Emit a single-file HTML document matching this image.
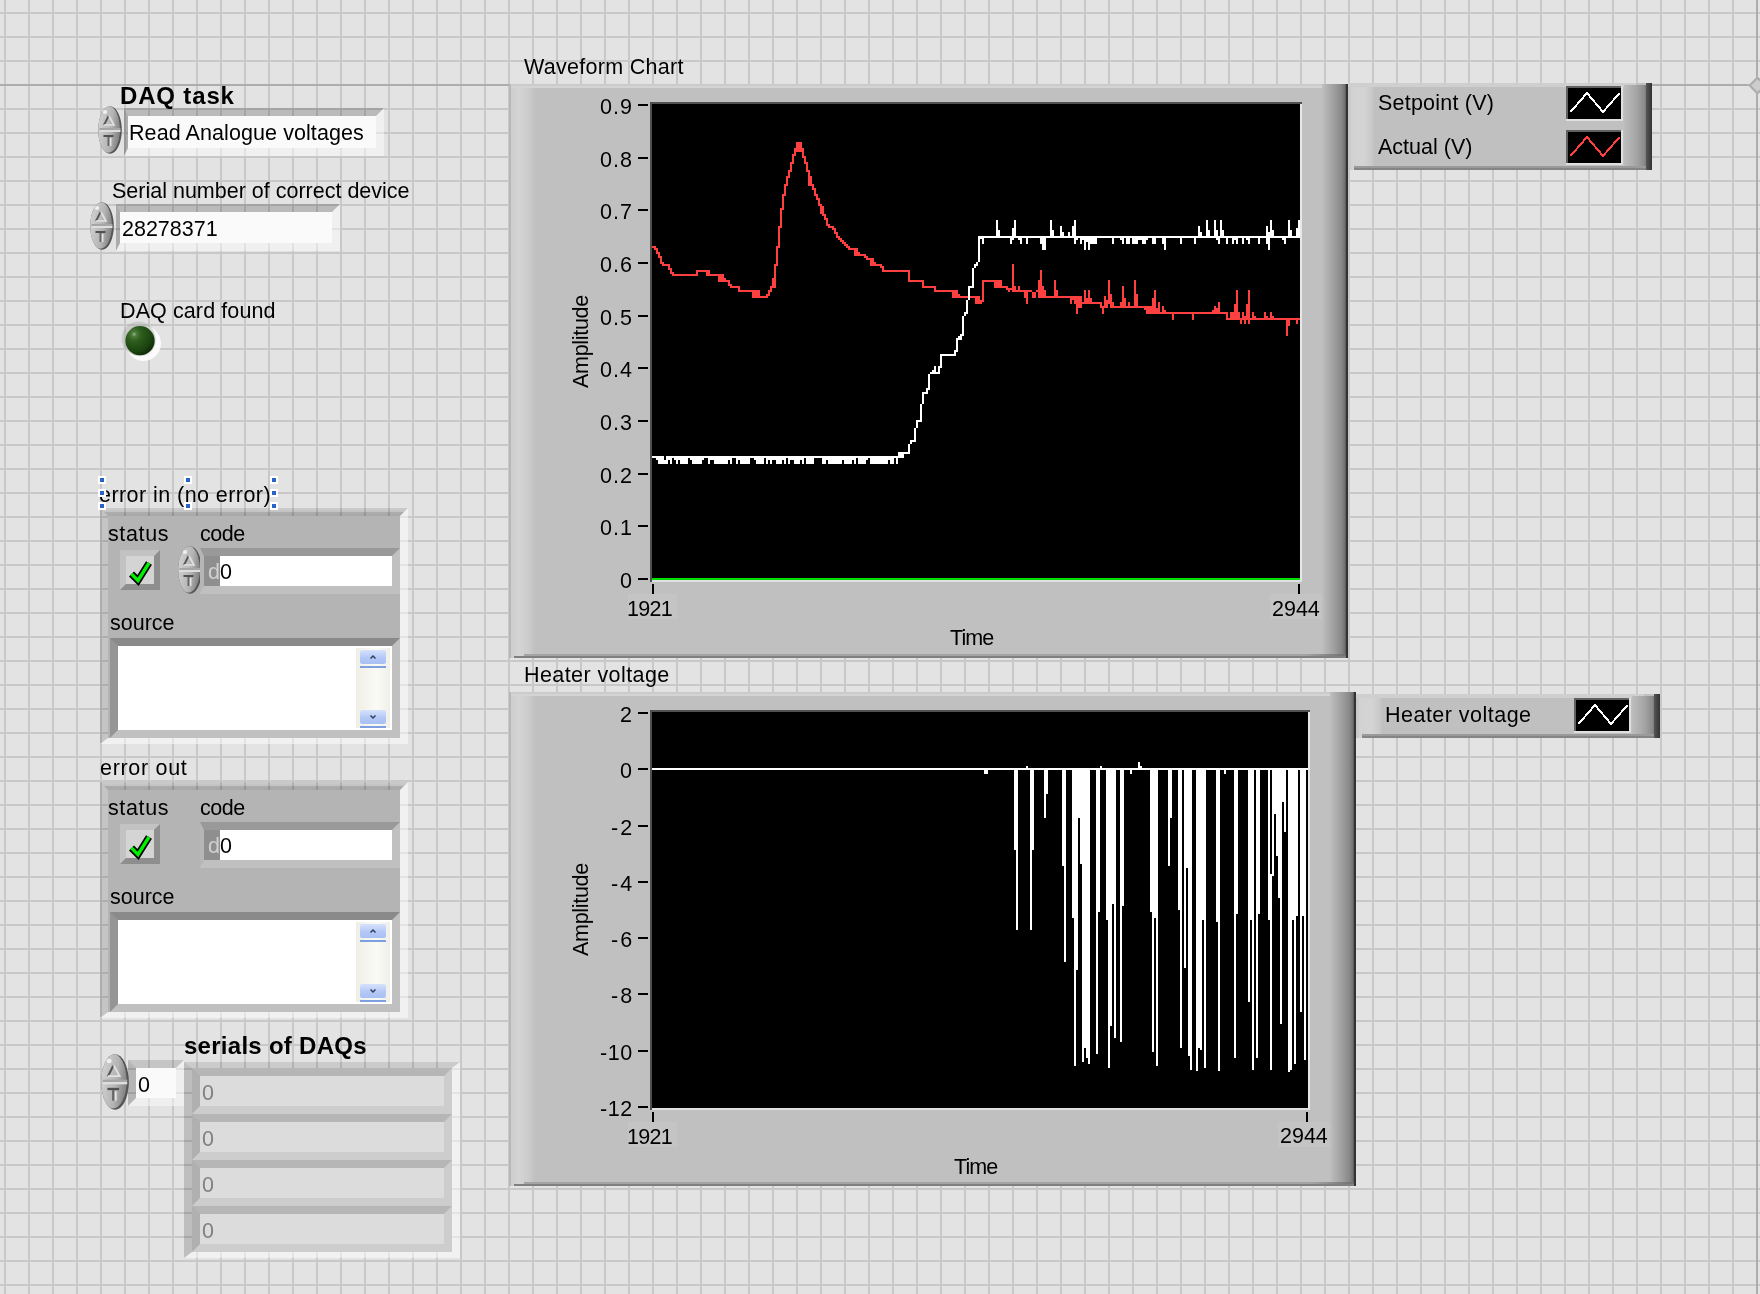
<!DOCTYPE html>
<html><head><meta charset="utf-8"><title>LabVIEW front panel</title>
<style>
html,body{margin:0;padding:0}
body{width:1760px;height:1294px;overflow:hidden;position:relative;background-color:#e3e3e3;
background-image:linear-gradient(90deg,#c8c8c8 2px,transparent 2px),linear-gradient(#c8c8c8 2px,transparent 2px);
background-size:24px 24px,24px 24px;background-position:4px 0,0 12px}
div{position:absolute;box-sizing:border-box}
.t{font-family:"Liberation Sans",sans-serif;line-height:1;white-space:pre;color:#000;will-change:transform}
</style></head><body>
<div style="left:0px;top:84px;width:1750px;height:2px;background:#adadad"></div>
<div style="left:1756px;top:0px;width:2px;height:1294px;background:#adadad"></div>
<div style="left:1750.5px;top:78.5px;width:13px;height:13px;transform:rotate(45deg);background:#cdcdcd;border:2px solid #adadad"></div>
<div class="t" style="left:120.2px;top:83.5px;font-size:24px;font-weight:bold;letter-spacing:0.84px;color:#000;">DAQ task</div>
<svg style="position:absolute;left:98px;top:106px" width="24" height="48" viewBox="0 0 24 48" preserveAspectRatio="none">
<defs><linearGradient id="sp98_106" x1="0" y1="0" x2="1" y2="0.25">
<stop offset="0" stop-color="#dadada"/><stop offset="0.35" stop-color="#c6c6c6"/><stop offset="0.7" stop-color="#b4b4b4"/><stop offset="1" stop-color="#8a8a8a"/></linearGradient></defs>
<clipPath id="csp98_106"><ellipse cx="12" cy="24" rx="11.8" ry="23.8"/></clipPath>
<g clip-path="url(#csp98_106)"><rect x="0" y="0" width="24" height="48" fill="#555"/>
<ellipse cx="10.3" cy="23.2" rx="11.6" ry="23.6" fill="url(#sp98_106)"/></g>
<ellipse cx="7" cy="6" rx="2.2" ry="2" fill="#f4f4f4" opacity="0.9"/>
<rect x="1.5" y="22" width="21" height="2" fill="#a6a6a6"/><rect x="1.5" y="24" width="21" height="2" fill="#dedede"/>
<path d="M6 19 L10.5 10" stroke="#555" stroke-width="1.8" fill="none"/>
<path d="M11 10 L16 19 L6 19" stroke="#e2e2e2" stroke-width="1.6" fill="none"/>
<path d="M5.5 30 L15.5 30" stroke="#505050" stroke-width="2" fill="none"/>
<path d="M10.5 31 L10.5 40" stroke="#666" stroke-width="2" fill="none"/>
<path d="M12.6 32 L12.6 40" stroke="#e6e6e6" stroke-width="1.6" fill="none"/>
</svg>
<div style="left:124px;top:108px;width:260px;height:48px;box-sizing:border-box;border-style:solid;border-width:8px 8px 8px 4px;border-color:rgba(0,0,0,.18) rgba(255,255,255,.45) rgba(255,255,255,.45) rgba(0,0,0,.24);background:#fafafa;background-clip:padding-box"></div>
<div class="t" style="left:129.4px;top:122.6px;font-size:21.5px;letter-spacing:0.08px;color:#000;">Read Analogue voltages</div>
<div class="t" style="left:111.8px;top:180.6px;font-size:21.5px;color:#000;">Serial number of correct device</div>
<svg style="position:absolute;left:90px;top:202px" width="24" height="48" viewBox="0 0 24 48" preserveAspectRatio="none">
<defs><linearGradient id="sp90_202" x1="0" y1="0" x2="1" y2="0.25">
<stop offset="0" stop-color="#dadada"/><stop offset="0.35" stop-color="#c6c6c6"/><stop offset="0.7" stop-color="#b4b4b4"/><stop offset="1" stop-color="#8a8a8a"/></linearGradient></defs>
<clipPath id="csp90_202"><ellipse cx="12" cy="24" rx="11.8" ry="23.8"/></clipPath>
<g clip-path="url(#csp90_202)"><rect x="0" y="0" width="24" height="48" fill="#555"/>
<ellipse cx="10.3" cy="23.2" rx="11.6" ry="23.6" fill="url(#sp90_202)"/></g>
<ellipse cx="7" cy="6" rx="2.2" ry="2" fill="#f4f4f4" opacity="0.9"/>
<rect x="1.5" y="22" width="21" height="2" fill="#a6a6a6"/><rect x="1.5" y="24" width="21" height="2" fill="#dedede"/>
<path d="M6 19 L10.5 10" stroke="#555" stroke-width="1.8" fill="none"/>
<path d="M11 10 L16 19 L6 19" stroke="#e2e2e2" stroke-width="1.6" fill="none"/>
<path d="M5.5 30 L15.5 30" stroke="#505050" stroke-width="2" fill="none"/>
<path d="M10.5 31 L10.5 40" stroke="#666" stroke-width="2" fill="none"/>
<path d="M12.6 32 L12.6 40" stroke="#e6e6e6" stroke-width="1.6" fill="none"/>
</svg>
<div style="left:116px;top:204px;width:224px;height:47px;box-sizing:border-box;border-style:solid;border-width:8px 8px 8px 4px;border-color:rgba(0,0,0,.18) rgba(255,255,255,.45) rgba(255,255,255,.45) rgba(0,0,0,.24);background:#fafafa;background-clip:padding-box"></div>
<div class="t" style="left:121.5px;top:218.7px;font-size:21.5px;color:#000;">28278371</div>
<div class="t" style="left:119.6px;top:301.0px;font-size:21.5px;letter-spacing:0.1px;color:#000;">DAQ card found</div>
<svg style="position:absolute;left:118px;top:318px" width="48" height="48" viewBox="0 0 48 48">
<defs><radialGradient id="led" cx="0.3" cy="0.28" r="0.85">
<stop offset="0" stop-color="#9ab48c"/><stop offset="0.1" stop-color="#4a7a38"/><stop offset="0.3" stop-color="#2c5c1c"/><stop offset="0.7" stop-color="#1b4410"/><stop offset="1" stop-color="#082004"/></radialGradient></defs>
<circle cx="25.5" cy="25.5" r="17.5" fill="#ffffff" opacity="0.85"/>
<circle cx="20.5" cy="20.5" r="17" fill="#9a9a9a" opacity="0.3"/>
<circle cx="22" cy="22.7" r="15.6" fill="#b8b8b8" opacity="0.5"/>
<circle cx="22" cy="22.7" r="14.6" fill="url(#led)"/>
</svg>
<div class="t" style="left:99.0px;top:485.0px;font-size:21.5px;letter-spacing:0.44px;color:#000;">error in (no error)</div>
<div style="left:100px;top:508px;width:308px;height:236px;box-sizing:border-box;border-style:solid;border-width:8px 8px 6px 8px;border-color:rgba(0,0,0,0) rgba(255,255,255,.5) rgba(255,255,255,.5) rgba(0,0,0,.13);background:#b4b4b4;background-clip:padding-box"></div>
<div style="left:100px;top:508px;width:308px;height:8px;background:linear-gradient(rgba(0,0,0,.1),rgba(0,0,0,.14) 50%,rgba(0,0,0,.24) 50%,rgba(0,0,0,.26));clip-path:polygon(0 0,100% 0,300px 100%,8px 100%)"></div>
<div class="t" style="left:107.7px;top:524.0px;font-size:21.5px;letter-spacing:0.62px;color:#000;">status</div>
<div class="t" style="left:200.0px;top:524.0px;font-size:21.5px;letter-spacing:-0.45px;color:#000;">code</div>
<svg style="position:absolute;left:120px;top:550px" width="40" height="40" viewBox="0 0 40 40">
<polygon points="0,0 40,0 34,6 6,6 6,34 0,40" fill="#c2c2c2"/>
<polygon points="40,0 40,40 0,40 6,34 34,34 34,6" fill="#8e8e8e"/>
<rect x="6" y="6" width="28" height="28" fill="#d4d4d4"/>
<path d="M11.5 24 L18 30.5 L29 13" fill="none" stroke="#000" stroke-width="7" stroke-linejoin="miter" stroke-linecap="butt"/>
<path d="M11.5 24 L18 30.5 L29 13" fill="none" stroke="#00f000" stroke-width="3.4" stroke-linejoin="miter" stroke-linecap="butt"/>
</svg>
<svg style="position:absolute;left:178px;top:546px" width="24" height="48" viewBox="0 0 24 48" preserveAspectRatio="none">
<defs><linearGradient id="sp178_546" x1="0" y1="0" x2="1" y2="0.25">
<stop offset="0" stop-color="#dadada"/><stop offset="0.35" stop-color="#c6c6c6"/><stop offset="0.7" stop-color="#b4b4b4"/><stop offset="1" stop-color="#8a8a8a"/></linearGradient></defs>
<clipPath id="csp178_546"><ellipse cx="12" cy="24" rx="11.8" ry="23.8"/></clipPath>
<g clip-path="url(#csp178_546)"><rect x="0" y="0" width="24" height="48" fill="#555"/>
<ellipse cx="10.3" cy="23.2" rx="11.6" ry="23.6" fill="url(#sp178_546)"/></g>
<ellipse cx="7" cy="6" rx="2.2" ry="2" fill="#f4f4f4" opacity="0.9"/>
<rect x="1.5" y="22" width="21" height="2" fill="#a6a6a6"/><rect x="1.5" y="24" width="21" height="2" fill="#dedede"/>
<path d="M6 19 L10.5 10" stroke="#555" stroke-width="1.8" fill="none"/>
<path d="M11 10 L16 19 L6 19" stroke="#e2e2e2" stroke-width="1.6" fill="none"/>
<path d="M5.5 30 L15.5 30" stroke="#505050" stroke-width="2" fill="none"/>
<path d="M10.5 31 L10.5 40" stroke="#666" stroke-width="2" fill="none"/>
<path d="M12.6 32 L12.6 40" stroke="#e6e6e6" stroke-width="1.6" fill="none"/>
</svg>
<div style="left:200px;top:548px;width:200px;height:46px;box-sizing:border-box;border-style:solid;border-width:8px 8px 8px 4px;border-color:#999999 #c0c0c0 #c0c0c0 #b6b6b6;background:#fff;background-clip:padding-box"></div>
<div style="left:204px;top:556px;width:16px;height:30px;background:#8f8f8f"></div>
<div class="t" style="left:207.7px;top:562.0px;font-size:21.5px;letter-spacing:-0.5px;color:#d0d0d0;">d</div>
<div class="t" style="left:219.5px;top:562.0px;font-size:21.5px;color:#000;">0</div>
<div class="t" style="left:109.6px;top:612.6px;font-size:21.5px;color:#000;">source</div>
<div style="left:110px;top:638px;width:290px;height:100px;box-sizing:border-box;border-style:solid;border-width:8px 8px 8px 8px;border-color:#8a8a8a #c0c0c0 #c0c0c0 #959595;background:#fff;background-clip:padding-box"></div>
<div style="left:356px;top:648px;width:34px;height:80px;background:linear-gradient(90deg,#efeee6,#fbfbf6 60%,#efeee8)"></div>
<div style="left:360px;top:650px;width:26px;height:14px;border-radius:2px;background:linear-gradient(#d6e2fc,#b4c8f6 55%,#a9c0f4)"></div>
<div style="left:360px;top:666px;width:26px;height:2px;background:#7d9fe0"></div>
<svg style="position:absolute;left:369px;top:654px" width="8" height="6"><path d="M1.5 4.5 L4 2 L6.5 4.5" fill="none" stroke="#33405a" stroke-width="1.5"/></svg>
<div style="left:360px;top:710px;width:26px;height:14px;border-radius:2px;background:linear-gradient(#d6e2fc,#b4c8f6 55%,#a9c0f4)"></div>
<div style="left:360px;top:726px;width:26px;height:2px;background:#7d9fe0"></div>
<svg style="position:absolute;left:369px;top:714px" width="8" height="6"><path d="M1.5 1.5 L4 4 L6.5 1.5" fill="none" stroke="#33405a" stroke-width="1.5"/></svg>
<div style="left:98px;top:476px;width:8px;height:8px;background:#fff"></div>
<div style="left:100px;top:478px;width:4px;height:4px;background:#2a62c8"></div>
<div style="left:98px;top:502px;width:8px;height:8px;background:#fff"></div>
<div style="left:100px;top:504px;width:4px;height:4px;background:#2a62c8"></div>
<div style="left:184px;top:476px;width:8px;height:8px;background:#fff"></div>
<div style="left:186px;top:478px;width:4px;height:4px;background:#2a62c8"></div>
<div style="left:184px;top:502px;width:8px;height:8px;background:#fff"></div>
<div style="left:186px;top:504px;width:4px;height:4px;background:#2a62c8"></div>
<div style="left:270px;top:476px;width:8px;height:8px;background:#fff"></div>
<div style="left:272px;top:478px;width:4px;height:4px;background:#2a62c8"></div>
<div style="left:270px;top:502px;width:8px;height:8px;background:#fff"></div>
<div style="left:272px;top:504px;width:4px;height:4px;background:#2a62c8"></div>
<div style="left:98px;top:489px;width:8px;height:8px;background:#fff"></div>
<div style="left:100px;top:491px;width:4px;height:4px;background:#2a62c8"></div>
<div style="left:270px;top:489px;width:8px;height:8px;background:#fff"></div>
<div style="left:272px;top:491px;width:4px;height:4px;background:#2a62c8"></div>
<div class="t" style="left:99.5px;top:758.4px;font-size:21.5px;letter-spacing:0.69px;color:#000;">error out</div>
<div style="left:100px;top:782px;width:308px;height:236px;box-sizing:border-box;border-style:solid;border-width:8px 8px 6px 8px;border-color:rgba(0,0,0,0) rgba(255,255,255,.5) rgba(255,255,255,.5) rgba(0,0,0,.13);background:#b4b4b4;background-clip:padding-box"></div>
<div style="left:100px;top:782px;width:308px;height:8px;background:linear-gradient(rgba(0,0,0,.1),rgba(0,0,0,.14) 50%,rgba(0,0,0,.24) 50%,rgba(0,0,0,.26));clip-path:polygon(0 0,100% 0,300px 100%,8px 100%)"></div>
<div class="t" style="left:107.7px;top:798.0px;font-size:21.5px;letter-spacing:0.62px;color:#000;">status</div>
<div class="t" style="left:200.0px;top:798.0px;font-size:21.5px;letter-spacing:-0.45px;color:#000;">code</div>
<svg style="position:absolute;left:120px;top:824px" width="40" height="40" viewBox="0 0 40 40">
<polygon points="0,0 40,0 34,6 6,6 6,34 0,40" fill="#c2c2c2"/>
<polygon points="40,0 40,40 0,40 6,34 34,34 34,6" fill="#8e8e8e"/>
<rect x="6" y="6" width="28" height="28" fill="#d4d4d4"/>
<path d="M11.5 24 L18 30.5 L29 13" fill="none" stroke="#000" stroke-width="7" stroke-linejoin="miter" stroke-linecap="butt"/>
<path d="M11.5 24 L18 30.5 L29 13" fill="none" stroke="#00f000" stroke-width="3.4" stroke-linejoin="miter" stroke-linecap="butt"/>
</svg>
<div style="left:200px;top:822px;width:200px;height:46px;box-sizing:border-box;border-style:solid;border-width:8px 8px 8px 4px;border-color:#999999 #c0c0c0 #c0c0c0 #b6b6b6;background:#fff;background-clip:padding-box"></div>
<div style="left:204px;top:830px;width:16px;height:30px;background:#8f8f8f"></div>
<div class="t" style="left:207.7px;top:836.0px;font-size:21.5px;letter-spacing:-0.5px;color:#d0d0d0;">d</div>
<div class="t" style="left:219.5px;top:836.0px;font-size:21.5px;color:#000;">0</div>
<div class="t" style="left:109.6px;top:886.6px;font-size:21.5px;color:#000;">source</div>
<div style="left:110px;top:912px;width:290px;height:100px;box-sizing:border-box;border-style:solid;border-width:8px 8px 8px 8px;border-color:#8a8a8a #c0c0c0 #c0c0c0 #959595;background:#fff;background-clip:padding-box"></div>
<div style="left:356px;top:922px;width:34px;height:80px;background:linear-gradient(90deg,#efeee6,#fbfbf6 60%,#efeee8)"></div>
<div style="left:360px;top:924px;width:26px;height:14px;border-radius:2px;background:linear-gradient(#d6e2fc,#b4c8f6 55%,#a9c0f4)"></div>
<div style="left:360px;top:940px;width:26px;height:2px;background:#7d9fe0"></div>
<svg style="position:absolute;left:369px;top:928px" width="8" height="6"><path d="M1.5 4.5 L4 2 L6.5 4.5" fill="none" stroke="#33405a" stroke-width="1.5"/></svg>
<div style="left:360px;top:984px;width:26px;height:14px;border-radius:2px;background:linear-gradient(#d6e2fc,#b4c8f6 55%,#a9c0f4)"></div>
<div style="left:360px;top:1000px;width:26px;height:2px;background:#7d9fe0"></div>
<svg style="position:absolute;left:369px;top:988px" width="8" height="6"><path d="M1.5 1.5 L4 4 L6.5 1.5" fill="none" stroke="#33405a" stroke-width="1.5"/></svg>
<div class="t" style="left:183.9px;top:1033.6px;font-size:24px;font-weight:bold;letter-spacing:0.27px;color:#000;">serials of DAQs</div>
<svg style="position:absolute;left:101px;top:1054px" width="28" height="56" viewBox="0 0 24 48" preserveAspectRatio="none">
<defs><linearGradient id="sp101_1054" x1="0" y1="0" x2="1" y2="0.25">
<stop offset="0" stop-color="#dadada"/><stop offset="0.35" stop-color="#c6c6c6"/><stop offset="0.7" stop-color="#b4b4b4"/><stop offset="1" stop-color="#8a8a8a"/></linearGradient></defs>
<clipPath id="csp101_1054"><ellipse cx="12" cy="24" rx="11.8" ry="23.8"/></clipPath>
<g clip-path="url(#csp101_1054)"><rect x="0" y="0" width="24" height="48" fill="#555"/>
<ellipse cx="10.3" cy="23.2" rx="11.6" ry="23.6" fill="url(#sp101_1054)"/></g>
<ellipse cx="7" cy="6" rx="2.2" ry="2" fill="#f4f4f4" opacity="0.9"/>
<rect x="1.5" y="22" width="21" height="2" fill="#a6a6a6"/><rect x="1.5" y="24" width="21" height="2" fill="#dedede"/>
<path d="M6 19 L10.5 10" stroke="#555" stroke-width="1.8" fill="none"/>
<path d="M11 10 L16 19 L6 19" stroke="#e2e2e2" stroke-width="1.6" fill="none"/>
<path d="M5.5 30 L15.5 30" stroke="#505050" stroke-width="2" fill="none"/>
<path d="M10.5 31 L10.5 40" stroke="#666" stroke-width="2" fill="none"/>
<path d="M12.6 32 L12.6 40" stroke="#e6e6e6" stroke-width="1.6" fill="none"/>
</svg>
<div style="left:128px;top:1060px;width:56px;height:46px;box-sizing:border-box;border-style:solid;border-width:8px 8px 8px 8px;border-color:rgba(0,0,0,.13) rgba(255,255,255,.45) rgba(255,255,255,.45) rgba(0,0,0,.2);background:#fafafa;background-clip:padding-box"></div>
<div class="t" style="left:138.0px;top:1074.6px;font-size:21.5px;color:#000;">0</div>
<div style="left:184px;top:1062px;width:276px;height:196px;box-sizing:border-box;border-style:solid;border-width:6px 8px 6px 8px;border-color:rgba(0,0,0,.10) rgba(255,255,255,.5) rgba(255,255,255,.5) rgba(0,0,0,.16);background:transparent;background-clip:padding-box"></div>
<div style="left:192px;top:1068px;width:260px;height:184px;background:#cdcdcd"></div>
<div style="left:192px;top:1068px;width:260px;height:46px;box-sizing:border-box;border-style:solid;border-width:8px 8px 8px 8px;border-color:#b6b6b6 #cdcdcd #cdcdcd #b0b0b0;background:#dcdcdc;background-clip:padding-box"></div>
<div class="t" style="left:202.0px;top:1082.8px;font-size:21.5px;color:#808080;">0</div>
<div style="left:192px;top:1114px;width:260px;height:46px;box-sizing:border-box;border-style:solid;border-width:8px 8px 8px 8px;border-color:#b6b6b6 #cdcdcd #cdcdcd #b0b0b0;background:#dcdcdc;background-clip:padding-box"></div>
<div class="t" style="left:202.0px;top:1128.8px;font-size:21.5px;color:#808080;">0</div>
<div style="left:192px;top:1160px;width:260px;height:46px;box-sizing:border-box;border-style:solid;border-width:8px 8px 8px 8px;border-color:#b6b6b6 #cdcdcd #cdcdcd #b0b0b0;background:#dcdcdc;background-clip:padding-box"></div>
<div class="t" style="left:202.0px;top:1174.8px;font-size:21.5px;color:#808080;">0</div>
<div style="left:192px;top:1206px;width:260px;height:46px;box-sizing:border-box;border-style:solid;border-width:8px 8px 8px 8px;border-color:#b6b6b6 #cdcdcd #cdcdcd #b0b0b0;background:#dcdcdc;background-clip:padding-box"></div>
<div class="t" style="left:202.0px;top:1220.8px;font-size:21.5px;color:#808080;">0</div>
<div style="left:509px;top:84px;width:839px;height:574px;background:#c0c0c0"></div>
<div style="left:509px;top:84px;width:26px;height:574px;background:linear-gradient(90deg,#b8b8b8 0,#b8b8b8 2px,#cecece 2px,#d4d4d4 40%,#cacaca 80%,#c0c0c0)"></div>
<div style="left:511px;top:84px;width:813px;height:4px;background:linear-gradient(#cbcbcb 50%,#d4d4d4 50%)"></div>
<div style="left:1322px;top:84px;width:26px;height:574px;background:linear-gradient(90deg,#c0c0c0,#b4b4b4 15%,#a0a0a0 45%,#888 75%,#6c6c6c 90%,#333 92%,#333)"></div>
<div style="left:524px;top:654px;width:822px;height:2px;background:linear-gradient(90deg,#a4a4a4 95%,#707070)"></div>
<div style="left:514px;top:656px;width:832px;height:2px;background:#808080"></div>
<div class="t" style="left:523.6px;top:56.8px;font-size:21.5px;letter-spacing:0.29px;color:#000;">Waveform Chart</div>
<div style="left:509px;top:692px;width:847px;height:494px;background:#c0c0c0"></div>
<div style="left:509px;top:692px;width:26px;height:494px;background:linear-gradient(90deg,#b8b8b8 0,#b8b8b8 2px,#cecece 2px,#d4d4d4 40%,#cacaca 80%,#c0c0c0)"></div>
<div style="left:511px;top:692px;width:821px;height:4px;background:linear-gradient(#cbcbcb 50%,#d4d4d4 50%)"></div>
<div style="left:1330px;top:692px;width:26px;height:494px;background:linear-gradient(90deg,#c0c0c0,#b4b4b4 15%,#a0a0a0 45%,#888 75%,#6c6c6c 90%,#333 92%,#333)"></div>
<div style="left:524px;top:1182px;width:830px;height:2px;background:linear-gradient(90deg,#a4a4a4 95%,#707070)"></div>
<div style="left:514px;top:1184px;width:840px;height:2px;background:#808080"></div>
<div class="t" style="left:523.6px;top:664.9px;font-size:21.5px;letter-spacing:0.42px;color:#000;">Heater voltage</div>
<div style="left:650px;top:102px;width:652px;height:480px;background:#505050"></div>
<div style="left:1300px;top:104px;width:2px;height:478px;background:#e8e8e8"></div>
<div style="left:652px;top:580px;width:650px;height:2px;background:#e0e0e0"></div>
<div style="left:652px;top:104px;width:648px;height:476px;background:#000"></div>
<div style="left:638px;top:578px;width:10px;height:2px;background:#000"></div>
<div class="t" style="left:620.0px;top:570.8px;font-size:21.5px;color:#000;">0</div>
<div style="left:638px;top:525px;width:10px;height:2px;background:#000"></div>
<div class="t" style="left:600.0px;top:518.2px;font-size:21.5px;letter-spacing:1.0px;color:#000;">0.1</div>
<div style="left:638px;top:473px;width:10px;height:2px;background:#000"></div>
<div class="t" style="left:600.0px;top:465.5px;font-size:21.5px;letter-spacing:1.0px;color:#000;">0.2</div>
<div style="left:638px;top:420px;width:10px;height:2px;background:#000"></div>
<div class="t" style="left:600.0px;top:412.9px;font-size:21.5px;letter-spacing:1.0px;color:#000;">0.3</div>
<div style="left:638px;top:367px;width:10px;height:2px;background:#000"></div>
<div class="t" style="left:600.0px;top:360.2px;font-size:21.5px;letter-spacing:1.0px;color:#000;">0.4</div>
<div style="left:638px;top:315px;width:10px;height:2px;background:#000"></div>
<div class="t" style="left:600.0px;top:307.6px;font-size:21.5px;letter-spacing:1.0px;color:#000;">0.5</div>
<div style="left:638px;top:262px;width:10px;height:2px;background:#000"></div>
<div class="t" style="left:600.0px;top:255.0px;font-size:21.5px;letter-spacing:1.0px;color:#000;">0.6</div>
<div style="left:638px;top:209px;width:10px;height:2px;background:#000"></div>
<div class="t" style="left:600.0px;top:202.3px;font-size:21.5px;letter-spacing:1.0px;color:#000;">0.7</div>
<div style="left:638px;top:157px;width:10px;height:2px;background:#000"></div>
<div class="t" style="left:600.0px;top:149.7px;font-size:21.5px;letter-spacing:1.0px;color:#000;">0.8</div>
<div style="left:638px;top:104px;width:10px;height:2px;background:#000"></div>
<div class="t" style="left:600.0px;top:97.0px;font-size:21.5px;letter-spacing:1.0px;color:#000;">0.9</div>
<div style="left:652px;top:584px;width:2px;height:10px;background:#000"></div>
<div style="left:1298px;top:584px;width:2px;height:10px;background:#000"></div>
<div style="left:628px;top:594px;width:49px;height:25px;background:rgba(255,255,255,.07)"></div>
<div style="left:1270px;top:594px;width:52px;height:25px;background:rgba(255,255,255,.07)"></div>
<div class="t" style="left:627.4px;top:598.8px;font-size:21.5px;letter-spacing:-0.7px;color:#000;">1921</div>
<div class="t" style="left:1271.8px;top:598.8px;font-size:21.5px;color:#000;">2944</div>
<div class="t" style="left:950.3px;top:628.3px;font-size:21.5px;letter-spacing:-0.9px;color:#000;">Time</div>
<div class="t" style="left:571px;top:388px;font-size:21.5px;letter-spacing:-0.3px;transform-origin:0 0;transform:rotate(-90deg)">Amplitude</div>
<div style="left:650px;top:710px;width:660px;height:400px;background:#505050"></div>
<div style="left:1308px;top:712px;width:2px;height:398px;background:#e8e8e8"></div>
<div style="left:652px;top:1108px;width:658px;height:2px;background:#e0e0e0"></div>
<div style="left:652px;top:712px;width:656px;height:396px;background:#000"></div>
<div style="left:638px;top:712px;width:10px;height:2px;background:#000"></div>
<div class="t" style="left:620.0px;top:705.1px;font-size:21.5px;color:#000;">2</div>
<div style="left:638px;top:768px;width:10px;height:2px;background:#000"></div>
<div class="t" style="left:620.0px;top:761.4px;font-size:21.5px;color:#000;">0</div>
<div style="left:638px;top:825px;width:10px;height:2px;background:#000"></div>
<div class="t" style="left:611.4px;top:817.7px;font-size:21.5px;letter-spacing:2.0px;color:#000;">-2</div>
<div style="left:638px;top:881px;width:10px;height:2px;background:#000"></div>
<div class="t" style="left:611.4px;top:873.9px;font-size:21.5px;letter-spacing:2.0px;color:#000;">-4</div>
<div style="left:638px;top:937px;width:10px;height:2px;background:#000"></div>
<div class="t" style="left:611.4px;top:930.2px;font-size:21.5px;letter-spacing:2.0px;color:#000;">-6</div>
<div style="left:638px;top:993px;width:10px;height:2px;background:#000"></div>
<div class="t" style="left:611.4px;top:986.4px;font-size:21.5px;letter-spacing:2.0px;color:#000;">-8</div>
<div style="left:638px;top:1050px;width:10px;height:2px;background:#000"></div>
<div class="t" style="left:600.0px;top:1042.7px;font-size:21.5px;letter-spacing:0.6px;color:#000;">-10</div>
<div style="left:638px;top:1106px;width:10px;height:2px;background:#000"></div>
<div class="t" style="left:600.0px;top:1099.0px;font-size:21.5px;letter-spacing:0.6px;color:#000;">-12</div>
<div style="left:652px;top:1112px;width:2px;height:10px;background:#000"></div>
<div style="left:1306px;top:1112px;width:2px;height:10px;background:#000"></div>
<div style="left:628px;top:1122px;width:49px;height:25px;background:rgba(255,255,255,.07)"></div>
<div style="left:1278px;top:1122px;width:52px;height:25px;background:rgba(255,255,255,.07)"></div>
<div class="t" style="left:627.4px;top:1126.8px;font-size:21.5px;letter-spacing:-0.7px;color:#000;">1921</div>
<div class="t" style="left:1279.8px;top:1126.4px;font-size:21.5px;color:#000;">2944</div>
<div class="t" style="left:954.0px;top:1156.6px;font-size:21.5px;letter-spacing:-0.9px;color:#000;">Time</div>
<div class="t" style="left:571px;top:956px;font-size:21.5px;letter-spacing:-0.3px;transform-origin:0 0;transform:rotate(-90deg)">Amplitude</div>
<div style="left:1348px;top:83px;width:304px;height:87px;background:#c0c0c0"></div>
<div style="left:1348px;top:83px;width:26px;height:87px;background:linear-gradient(90deg,#c4c4c4,#d2d2d2 15%,#d4d4d4 60%,#cacaca 90%,#c0c0c0)"></div>
<div style="left:1348px;top:83px;width:288px;height:4px;background:#cfcfcf"></div>
<div style="left:1624px;top:85px;width:28px;height:85px;background:linear-gradient(90deg,#bdbdbd,#b0b0b0 25%,#a0a0a0 50%,#888 75%,#6a6a6a 80%,#444 85%,#333)"></div>
<div style="left:1646px;top:83px;width:6px;height:87px;background:linear-gradient(90deg,#555,#333)"></div>
<div style="left:1354px;top:166px;width:292px;height:4px;background:linear-gradient(#9a9a9a 50%,#858585 50%)"></div>
<div class="t" style="left:1377.6px;top:92.8px;font-size:21.5px;letter-spacing:0.22px;color:#000;">Setpoint (V)</div>
<div class="t" style="left:1377.6px;top:136.8px;font-size:21.5px;color:#000;">Actual (V)</div>
<svg style="position:absolute;left:1566px;top:86px" width="57" height="35">
<rect x="0" y="0" width="57" height="35" fill="#e0e0e0"/><rect x="0" y="0" width="55" height="33" fill="#606060"/>
<rect x="2" y="2" width="53" height="31" fill="#000"/>
<polyline points="4.5,26 21,7 37,26 53.5,7" fill="none" stroke="#ffffff" stroke-width="2" shape-rendering="crispEdges"/></svg>
<svg style="position:absolute;left:1566px;top:130px" width="57" height="35">
<rect x="0" y="0" width="57" height="35" fill="#e0e0e0"/><rect x="0" y="0" width="55" height="33" fill="#606060"/>
<rect x="2" y="2" width="53" height="31" fill="#000"/>
<polyline points="4.5,26 21,7 37,26 53.5,7" fill="none" stroke="#ff4040" stroke-width="2" shape-rendering="crispEdges"/></svg>
<div style="left:1356px;top:694px;width:304px;height:44px;background:#c0c0c0"></div>
<div style="left:1356px;top:694px;width:26px;height:44px;background:linear-gradient(90deg,#c4c4c4,#d2d2d2 15%,#d4d4d4 60%,#cacaca 90%,#c0c0c0)"></div>
<div style="left:1356px;top:694px;width:288px;height:4px;background:#cfcfcf"></div>
<div style="left:1632px;top:696px;width:28px;height:42px;background:linear-gradient(90deg,#bdbdbd,#b0b0b0 25%,#a0a0a0 50%,#888 75%,#6a6a6a 80%,#444 85%,#333)"></div>
<div style="left:1654px;top:694px;width:6px;height:44px;background:linear-gradient(90deg,#555,#333)"></div>
<div style="left:1362px;top:734px;width:292px;height:4px;background:linear-gradient(#9a9a9a 50%,#858585 50%)"></div>
<div class="t" style="left:1385.3px;top:705.0px;font-size:21.5px;letter-spacing:0.48px;color:#000;">Heater voltage</div>
<svg style="position:absolute;left:1574px;top:698px" width="57" height="35">
<rect x="0" y="0" width="57" height="35" fill="#e0e0e0"/><rect x="0" y="0" width="55" height="33" fill="#606060"/>
<rect x="2" y="2" width="53" height="31" fill="#000"/>
<polyline points="4.5,26 21,7 37,26 53.5,7" fill="none" stroke="#ffffff" stroke-width="2" shape-rendering="crispEdges"/></svg>
<svg style="position:absolute;left:652px;top:104px" width="650" height="478" viewBox="652 104 650 478" shape-rendering="crispEdges"><rect x="652" y="246" width="2" height="2" fill="#ff4040"/><rect x="654" y="246" width="2" height="4" fill="#ff4040"/><rect x="656" y="248" width="2" height="6" fill="#ff4040"/><rect x="658" y="252" width="2" height="6" fill="#ff4040"/><rect x="660" y="256" width="2" height="8" fill="#ff4040"/><rect x="662" y="262" width="2" height="4" fill="#ff4040"/><rect x="664" y="264" width="2" height="2" fill="#ff4040"/><rect x="666" y="264" width="2" height="2" fill="#ff4040"/><rect x="668" y="264" width="2" height="6" fill="#ff4040"/><rect x="670" y="268" width="2" height="6" fill="#ff4040"/><rect x="672" y="272" width="2" height="4" fill="#ff4040"/><rect x="674" y="274" width="2" height="2" fill="#ff4040"/><rect x="676" y="274" width="2" height="2" fill="#ff4040"/><rect x="678" y="274" width="2" height="2" fill="#ff4040"/><rect x="680" y="274" width="2" height="2" fill="#ff4040"/><rect x="682" y="274" width="2" height="2" fill="#ff4040"/><rect x="684" y="274" width="2" height="2" fill="#ff4040"/><rect x="686" y="274" width="2" height="2" fill="#ff4040"/><rect x="688" y="274" width="2" height="2" fill="#ff4040"/><rect x="690" y="274" width="2" height="2" fill="#ff4040"/><rect x="692" y="274" width="2" height="2" fill="#ff4040"/><rect x="694" y="274" width="2" height="2" fill="#ff4040"/><rect x="696" y="270" width="2" height="6" fill="#ff4040"/><rect x="698" y="270" width="2" height="2" fill="#ff4040"/><rect x="700" y="270" width="2" height="2" fill="#ff4040"/><rect x="702" y="270" width="2" height="2" fill="#ff4040"/><rect x="704" y="270" width="2" height="2" fill="#ff4040"/><rect x="706" y="270" width="2" height="2" fill="#ff4040"/><rect x="708" y="270" width="2" height="6" fill="#ff4040"/><rect x="710" y="274" width="2" height="2" fill="#ff4040"/><rect x="712" y="274" width="2" height="2" fill="#ff4040"/><rect x="714" y="274" width="2" height="2" fill="#ff4040"/><rect x="716" y="274" width="2" height="2" fill="#ff4040"/><rect x="718" y="274" width="2" height="6" fill="#ff4040"/><rect x="720" y="278" width="2" height="2" fill="#ff4040"/><rect x="722" y="278" width="2" height="2" fill="#ff4040"/><rect x="724" y="278" width="2" height="4" fill="#ff4040"/><rect x="726" y="280" width="2" height="2" fill="#ff4040"/><rect x="728" y="280" width="2" height="6" fill="#ff4040"/><rect x="730" y="284" width="2" height="4" fill="#ff4040"/><rect x="732" y="286" width="2" height="2" fill="#ff4040"/><rect x="734" y="286" width="2" height="2" fill="#ff4040"/><rect x="736" y="286" width="2" height="2" fill="#ff4040"/><rect x="738" y="286" width="2" height="6" fill="#ff4040"/><rect x="740" y="290" width="2" height="2" fill="#ff4040"/><rect x="742" y="290" width="2" height="2" fill="#ff4040"/><rect x="744" y="290" width="2" height="2" fill="#ff4040"/><rect x="746" y="290" width="2" height="2" fill="#ff4040"/><rect x="748" y="290" width="2" height="2" fill="#ff4040"/><rect x="750" y="290" width="2" height="2" fill="#ff4040"/><rect x="752" y="290" width="2" height="4" fill="#ff4040"/><rect x="754" y="292" width="2" height="6" fill="#ff4040"/><rect x="756" y="296" width="2" height="2" fill="#ff4040"/><rect x="758" y="296" width="2" height="2" fill="#ff4040"/><rect x="760" y="296" width="2" height="2" fill="#ff4040"/><rect x="762" y="296" width="2" height="2" fill="#ff4040"/><rect x="764" y="296" width="2" height="2" fill="#ff4040"/><rect x="766" y="294" width="2" height="4" fill="#ff4040"/><rect x="768" y="290" width="2" height="6" fill="#ff4040"/><rect x="770" y="286" width="2" height="6" fill="#ff4040"/><rect x="772" y="280" width="2" height="8" fill="#ff4040"/><rect x="774" y="264" width="2" height="18" fill="#ff4040"/><rect x="776" y="246" width="2" height="20" fill="#ff4040"/><rect x="778" y="226" width="2" height="22" fill="#ff4040"/><rect x="780" y="208" width="2" height="20" fill="#ff4040"/><rect x="782" y="194" width="2" height="16" fill="#ff4040"/><rect x="784" y="184" width="2" height="12" fill="#ff4040"/><rect x="786" y="176" width="2" height="10" fill="#ff4040"/><rect x="788" y="170" width="2" height="8" fill="#ff4040"/><rect x="790" y="162" width="2" height="10" fill="#ff4040"/><rect x="792" y="154" width="2" height="10" fill="#ff4040"/><rect x="794" y="148" width="2" height="8" fill="#ff4040"/><rect x="796" y="142" width="2" height="8" fill="#ff4040"/><rect x="798" y="142" width="2" height="4" fill="#ff4040"/><rect x="800" y="144" width="2" height="6" fill="#ff4040"/><rect x="802" y="148" width="2" height="10" fill="#ff4040"/><rect x="804" y="156" width="2" height="8" fill="#ff4040"/><rect x="806" y="162" width="2" height="10" fill="#ff4040"/><rect x="808" y="170" width="2" height="8" fill="#ff4040"/><rect x="810" y="176" width="2" height="10" fill="#ff4040"/><rect x="812" y="184" width="2" height="6" fill="#ff4040"/><rect x="814" y="188" width="2" height="8" fill="#ff4040"/><rect x="816" y="194" width="2" height="6" fill="#ff4040"/><rect x="818" y="198" width="2" height="8" fill="#ff4040"/><rect x="820" y="204" width="2" height="6" fill="#ff4040"/><rect x="822" y="208" width="2" height="8" fill="#ff4040"/><rect x="824" y="214" width="2" height="6" fill="#ff4040"/><rect x="826" y="218" width="2" height="8" fill="#ff4040"/><rect x="828" y="224" width="2" height="4" fill="#ff4040"/><rect x="830" y="226" width="2" height="2" fill="#ff4040"/><rect x="832" y="226" width="2" height="4" fill="#ff4040"/><rect x="834" y="228" width="2" height="6" fill="#ff4040"/><rect x="836" y="232" width="2" height="6" fill="#ff4040"/><rect x="838" y="236" width="2" height="4" fill="#ff4040"/><rect x="840" y="238" width="2" height="4" fill="#ff4040"/><rect x="842" y="240" width="2" height="4" fill="#ff4040"/><rect x="844" y="242" width="2" height="4" fill="#ff4040"/><rect x="846" y="244" width="2" height="4" fill="#ff4040"/><rect x="848" y="246" width="2" height="4" fill="#ff4040"/><rect x="850" y="248" width="2" height="2" fill="#ff4040"/><rect x="852" y="248" width="2" height="2" fill="#ff4040"/><rect x="854" y="248" width="2" height="4" fill="#ff4040"/><rect x="856" y="250" width="2" height="4" fill="#ff4040"/><rect x="858" y="252" width="2" height="4" fill="#ff4040"/><rect x="860" y="254" width="2" height="2" fill="#ff4040"/><rect x="862" y="254" width="2" height="2" fill="#ff4040"/><rect x="864" y="254" width="2" height="4" fill="#ff4040"/><rect x="866" y="256" width="2" height="4" fill="#ff4040"/><rect x="868" y="258" width="2" height="2" fill="#ff4040"/><rect x="870" y="258" width="2" height="2" fill="#ff4040"/><rect x="872" y="258" width="2" height="6" fill="#ff4040"/><rect x="874" y="262" width="2" height="4" fill="#ff4040"/><rect x="876" y="264" width="2" height="2" fill="#ff4040"/><rect x="878" y="264" width="2" height="2" fill="#ff4040"/><rect x="880" y="264" width="2" height="4" fill="#ff4040"/><rect x="882" y="266" width="2" height="6" fill="#ff4040"/><rect x="884" y="270" width="2" height="2" fill="#ff4040"/><rect x="886" y="270" width="2" height="2" fill="#ff4040"/><rect x="888" y="270" width="2" height="2" fill="#ff4040"/><rect x="890" y="270" width="2" height="2" fill="#ff4040"/><rect x="892" y="270" width="2" height="2" fill="#ff4040"/><rect x="894" y="270" width="2" height="2" fill="#ff4040"/><rect x="896" y="270" width="2" height="2" fill="#ff4040"/><rect x="898" y="270" width="2" height="2" fill="#ff4040"/><rect x="900" y="270" width="2" height="2" fill="#ff4040"/><rect x="902" y="270" width="2" height="2" fill="#ff4040"/><rect x="904" y="270" width="2" height="2" fill="#ff4040"/><rect x="906" y="270" width="2" height="2" fill="#ff4040"/><rect x="908" y="270" width="2" height="12" fill="#ff4040"/><rect x="910" y="280" width="2" height="2" fill="#ff4040"/><rect x="912" y="280" width="2" height="2" fill="#ff4040"/><rect x="914" y="280" width="2" height="2" fill="#ff4040"/><rect x="916" y="280" width="2" height="2" fill="#ff4040"/><rect x="918" y="280" width="2" height="2" fill="#ff4040"/><rect x="920" y="280" width="2" height="2" fill="#ff4040"/><rect x="922" y="280" width="2" height="8" fill="#ff4040"/><rect x="924" y="286" width="2" height="2" fill="#ff4040"/><rect x="926" y="286" width="2" height="2" fill="#ff4040"/><rect x="928" y="286" width="2" height="2" fill="#ff4040"/><rect x="930" y="286" width="2" height="2" fill="#ff4040"/><rect x="932" y="286" width="2" height="2" fill="#ff4040"/><rect x="934" y="286" width="2" height="6" fill="#ff4040"/><rect x="936" y="290" width="2" height="2" fill="#ff4040"/><rect x="938" y="290" width="2" height="2" fill="#ff4040"/><rect x="940" y="290" width="2" height="2" fill="#ff4040"/><rect x="942" y="290" width="2" height="2" fill="#ff4040"/><rect x="944" y="290" width="2" height="2" fill="#ff4040"/><rect x="946" y="290" width="2" height="2" fill="#ff4040"/><rect x="948" y="290" width="2" height="2" fill="#ff4040"/><rect x="950" y="290" width="2" height="2" fill="#ff4040"/><rect x="952" y="290" width="2" height="8" fill="#ff4040"/><rect x="954" y="296" width="2" height="2" fill="#ff4040"/><rect x="956" y="296" width="2" height="2" fill="#ff4040"/><rect x="958" y="296" width="2" height="2" fill="#ff4040"/><rect x="960" y="296" width="2" height="2" fill="#ff4040"/><rect x="962" y="296" width="2" height="2" fill="#ff4040"/><rect x="964" y="296" width="2" height="2" fill="#ff4040"/><rect x="966" y="296" width="2" height="2" fill="#ff4040"/><rect x="968" y="296" width="2" height="2" fill="#ff4040"/><rect x="970" y="296" width="2" height="2" fill="#ff4040"/><rect x="972" y="296" width="2" height="2" fill="#ff4040"/><rect x="974" y="296" width="2" height="2" fill="#ff4040"/><rect x="718" y="274" width="6" height="8" fill="#ff4040"/><rect x="752" y="290" width="8" height="8" fill="#ff4040"/><rect x="772" y="278" width="4" height="10" fill="#ff4040"/><rect x="796" y="142" width="6" height="10" fill="#ff4040"/><rect x="808" y="176" width="4" height="10" fill="#ff4040"/><rect x="820" y="206" width="4" height="8" fill="#ff4040"/><rect x="854" y="248" width="4" height="8" fill="#ff4040"/><rect x="870" y="258" width="4" height="8" fill="#ff4040"/><rect x="706" y="270" width="4" height="6" fill="#ff4040"/><rect x="952" y="290" width="6" height="8" fill="#ff4040"/><rect x="958" y="294" width="2" height="4" fill="#ff4040"/><rect x="975" y="296" width="5" height="8.0" fill="#ff4040"/><rect x="980" y="300" width="2" height="4.0" fill="#ff4040"/><rect x="982" y="280" width="2" height="22.0" fill="#ff4040"/><rect x="984" y="280" width="10" height="2.2" fill="#ff4040"/><rect x="994" y="280" width="8" height="8.0" fill="#ff4040"/><rect x="1002" y="286" width="4" height="2.0" fill="#ff4040"/><rect x="1006" y="286" width="2" height="4.0" fill="#ff4040"/><rect x="1008" y="288" width="2" height="4.0" fill="#ff4040"/><rect x="1010" y="288" width="2" height="2.0" fill="#ff4040"/><rect x="1012" y="264" width="2" height="28.0" fill="#ff4040"/><rect x="1014" y="286" width="2" height="6.0" fill="#ff4040"/><rect x="1016" y="290" width="2" height="2.0" fill="#ff4040"/><rect x="1018" y="286" width="2" height="6.0" fill="#ff4040"/><rect x="1020" y="290" width="4" height="2.0" fill="#ff4040"/><rect x="1024" y="290" width="2" height="8.0" fill="#ff4040"/><rect x="1026" y="290" width="2" height="14.0" fill="#ff4040"/><rect x="1028" y="290" width="4" height="2.0" fill="#ff4040"/><rect x="1032" y="292" width="4" height="6.0" fill="#ff4040"/><rect x="1036" y="290" width="2" height="2.0" fill="#ff4040"/><rect x="1038" y="280" width="2" height="18.0" fill="#ff4040"/><rect x="1040" y="270" width="2" height="28.0" fill="#ff4040"/><rect x="1042" y="286" width="2" height="12.0" fill="#ff4040"/><rect x="1044" y="290" width="2" height="8.0" fill="#ff4040"/><rect x="1046" y="296" width="8" height="2.0" fill="#ff4040"/><rect x="1054" y="280" width="2" height="18.0" fill="#ff4040"/><rect x="1056" y="290" width="2" height="8.0" fill="#ff4040"/><rect x="1058" y="296" width="12" height="2.0" fill="#ff4040"/><rect x="1070" y="296" width="2" height="8.0" fill="#ff4040"/><rect x="1072" y="296" width="2" height="4.0" fill="#ff4040"/><rect x="1074" y="296" width="2" height="8.0" fill="#ff4040"/><rect x="1076" y="296" width="2" height="18.0" fill="#ff4040"/><rect x="1078" y="296" width="4" height="12.0" fill="#ff4040"/><rect x="1082" y="302" width="2" height="2.0" fill="#ff4040"/><rect x="1084" y="290" width="2" height="14.0" fill="#ff4040"/><rect x="1086" y="298" width="2" height="6.0" fill="#ff4040"/><rect x="1088" y="290" width="2" height="14.0" fill="#ff4040"/><rect x="1090" y="298" width="2" height="6.0" fill="#ff4040"/><rect x="1092" y="302" width="8" height="2.0" fill="#ff4040"/><rect x="1100" y="302" width="2" height="6.0" fill="#ff4040"/><rect x="1102" y="306" width="2" height="8.0" fill="#ff4040"/><rect x="1104" y="296" width="2" height="12.0" fill="#ff4040"/><rect x="1106" y="300" width="2" height="8.0" fill="#ff4040"/><rect x="1108" y="280" width="2" height="24.0" fill="#ff4040"/><rect x="1110" y="294" width="2" height="14.0" fill="#ff4040"/><rect x="1112" y="302" width="2" height="6.0" fill="#ff4040"/><rect x="1114" y="306" width="6" height="2.0" fill="#ff4040"/><rect x="1120" y="302" width="2" height="6.0" fill="#ff4040"/><rect x="1122" y="286" width="2" height="22.0" fill="#ff4040"/><rect x="1124" y="298" width="2" height="10.0" fill="#ff4040"/><rect x="1126" y="306" width="2" height="2.0" fill="#ff4040"/><rect x="1128" y="302" width="2" height="6.0" fill="#ff4040"/><rect x="1130" y="306" width="4" height="2.0" fill="#ff4040"/><rect x="1134" y="280" width="2" height="28.0" fill="#ff4040"/><rect x="1136" y="294" width="2" height="14.0" fill="#ff4040"/><rect x="1138" y="306" width="6" height="2.0" fill="#ff4040"/><rect x="1144" y="306" width="2" height="4.0" fill="#ff4040"/><rect x="1146" y="306" width="6" height="8.0" fill="#ff4040"/><rect x="1152" y="298" width="2" height="16.0" fill="#ff4040"/><rect x="1154" y="290" width="2" height="24.0" fill="#ff4040"/><rect x="1156" y="308" width="2" height="6.0" fill="#ff4040"/><rect x="1158" y="302" width="2" height="12.0" fill="#ff4040"/><rect x="1160" y="312" width="2" height="2.0" fill="#ff4040"/><rect x="1162" y="306" width="2" height="8.0" fill="#ff4040"/><rect x="1164" y="310" width="2" height="4.0" fill="#ff4040"/><rect x="1166" y="312" width="6" height="2.0" fill="#ff4040"/><rect x="1172" y="312" width="2" height="8.0" fill="#ff4040"/><rect x="1174" y="312" width="18" height="2.0" fill="#ff4040"/><rect x="1192" y="312" width="2" height="8.0" fill="#ff4040"/><rect x="1194" y="312" width="18" height="2.0" fill="#ff4040"/><rect x="1212" y="310" width="2" height="4.0" fill="#ff4040"/><rect x="1214" y="306" width="2" height="8.0" fill="#ff4040"/><rect x="1216" y="308" width="2" height="6.0" fill="#ff4040"/><rect x="1218" y="302" width="2" height="12.0" fill="#ff4040"/><rect x="1220" y="312" width="6" height="2.0" fill="#ff4040"/><rect x="1226" y="312" width="2" height="8.0" fill="#ff4040"/><rect x="1228" y="318" width="2" height="2.0" fill="#ff4040"/><rect x="1230" y="312" width="4" height="8.0" fill="#ff4040"/><rect x="1234" y="304" width="2" height="16.0" fill="#ff4040"/><rect x="1236" y="290" width="2" height="30.0" fill="#ff4040"/><rect x="1238" y="312" width="2" height="8.0" fill="#ff4040"/><rect x="1240" y="318" width="2" height="6.0" fill="#ff4040"/><rect x="1242" y="312" width="2" height="8.0" fill="#ff4040"/><rect x="1244" y="316" width="2" height="8.0" fill="#ff4040"/><rect x="1246" y="304" width="2" height="16.0" fill="#ff4040"/><rect x="1248" y="290" width="2" height="34.0" fill="#ff4040"/><rect x="1250" y="318" width="2" height="2.0" fill="#ff4040"/><rect x="1252" y="312" width="2" height="8.0" fill="#ff4040"/><rect x="1254" y="316" width="2" height="4.0" fill="#ff4040"/><rect x="1256" y="318" width="8" height="2.0" fill="#ff4040"/><rect x="1264" y="312" width="2" height="8.0" fill="#ff4040"/><rect x="1266" y="316" width="2" height="4.0" fill="#ff4040"/><rect x="1268" y="318" width="2" height="2.0" fill="#ff4040"/><rect x="1270" y="312" width="2" height="8.0" fill="#ff4040"/><rect x="1272" y="316" width="2" height="4.0" fill="#ff4040"/><rect x="1274" y="318" width="12" height="2.0" fill="#ff4040"/><rect x="1286" y="318" width="2" height="18.0" fill="#ff4040"/><rect x="1288" y="318" width="2" height="8.0" fill="#ff4040"/><rect x="1290" y="318" width="6" height="2.0" fill="#ff4040"/><rect x="1296" y="318" width="2" height="6.0" fill="#ff4040"/><rect x="1298" y="318" width="2" height="2.0" fill="#ff4040"/><path d="M652.0,457.0 L897.0,457.0" fill="none" stroke="#fff" stroke-width="2"/><path d="M979.0,237.0 L1300.0,237.0" fill="none" stroke="#fff" stroke-width="2"/><rect x="898" y="452" width="2" height="6" fill="#fff"/><rect x="900" y="452" width="2" height="6" fill="#fff"/><rect x="902" y="452" width="2" height="6" fill="#fff"/><rect x="904" y="452" width="2" height="2" fill="#fff"/><rect x="906" y="452" width="2" height="2" fill="#fff"/><rect x="908" y="444" width="2" height="10" fill="#fff"/><rect x="910" y="440" width="2" height="4" fill="#fff"/><rect x="912" y="440" width="2" height="2" fill="#fff"/><rect x="914" y="428" width="2" height="14" fill="#fff"/><rect x="916" y="420" width="2" height="8" fill="#fff"/><rect x="918" y="420" width="2" height="2" fill="#fff"/><rect x="920" y="404" width="2" height="18" fill="#fff"/><rect x="922" y="392" width="2" height="12" fill="#fff"/><rect x="924" y="392" width="2" height="2" fill="#fff"/><rect x="926" y="388" width="2" height="6" fill="#fff"/><rect x="928" y="374" width="2" height="16" fill="#fff"/><rect x="930" y="372" width="2" height="2" fill="#fff"/><rect x="932" y="370" width="2" height="4" fill="#fff"/><rect x="934" y="366" width="2" height="8" fill="#fff"/><rect x="936" y="372" width="2" height="2" fill="#fff"/><rect x="938" y="366" width="2" height="8" fill="#fff"/><rect x="940" y="354" width="2" height="14" fill="#fff"/><rect x="942" y="354" width="2" height="2" fill="#fff"/><rect x="944" y="354" width="2" height="2" fill="#fff"/><rect x="946" y="354" width="2" height="2" fill="#fff"/><rect x="948" y="354" width="2" height="2" fill="#fff"/><rect x="950" y="354" width="2" height="2" fill="#fff"/><rect x="952" y="354" width="2" height="2" fill="#fff"/><rect x="954" y="350" width="2" height="6" fill="#fff"/><rect x="956" y="338" width="2" height="14" fill="#fff"/><rect x="958" y="336" width="2" height="4" fill="#fff"/><rect x="960" y="334" width="2" height="6" fill="#fff"/><rect x="962" y="316" width="2" height="20" fill="#fff"/><rect x="964" y="312" width="2" height="4" fill="#fff"/><rect x="966" y="300" width="2" height="14" fill="#fff"/><rect x="968" y="286" width="2" height="14" fill="#fff"/><rect x="970" y="286" width="2" height="2" fill="#fff"/><rect x="972" y="268" width="2" height="20" fill="#fff"/><rect x="974" y="264" width="2" height="4" fill="#fff"/><rect x="976" y="262" width="2" height="4" fill="#fff"/><rect x="978" y="236" width="2" height="26" fill="#fff"/><rect x="652" y="456" width="246" height="8" fill="#fff"/><rect x="652" y="458" width="4" height="6" fill="#000"/><rect x="656" y="460" width="2" height="4" fill="#000"/><rect x="668" y="460" width="2" height="4" fill="#000"/><rect x="672" y="458" width="2" height="6" fill="#000"/><rect x="674" y="460" width="2" height="4" fill="#000"/><rect x="678" y="460" width="2" height="4" fill="#000"/><rect x="688" y="458" width="2" height="6" fill="#000"/><rect x="690" y="460" width="2" height="4" fill="#000"/><rect x="702" y="460" width="2" height="4" fill="#000"/><rect x="704" y="458" width="4" height="6" fill="#000"/><rect x="710" y="460" width="4" height="4" fill="#000"/><rect x="728" y="460" width="2" height="4" fill="#000"/><rect x="732" y="458" width="4" height="6" fill="#000"/><rect x="738" y="460" width="2" height="4" fill="#000"/><rect x="750" y="458" width="4" height="6" fill="#000"/><rect x="754" y="460" width="2" height="4" fill="#000"/><rect x="764" y="458" width="2" height="6" fill="#000"/><rect x="768" y="460" width="2" height="4" fill="#000"/><rect x="772" y="460" width="4" height="4" fill="#000"/><rect x="782" y="460" width="2" height="4" fill="#000"/><rect x="786" y="458" width="2" height="6" fill="#000"/><rect x="790" y="460" width="4" height="4" fill="#000"/><rect x="800" y="460" width="2" height="4" fill="#000"/><rect x="804" y="458" width="2" height="6" fill="#000"/><rect x="814" y="458" width="8" height="6" fill="#000"/><rect x="826" y="460" width="2" height="4" fill="#000"/><rect x="842" y="460" width="2" height="4" fill="#000"/><rect x="852" y="460" width="2" height="4" fill="#000"/><rect x="856" y="458" width="2" height="6" fill="#000"/><rect x="866" y="460" width="2" height="4" fill="#000"/><rect x="868" y="458" width="2" height="6" fill="#000"/><rect x="888" y="460" width="2" height="4" fill="#000"/><rect x="894" y="458" width="2" height="6" fill="#000"/><rect x="664" y="456" width="2" height="4" fill="#000"/><rect x="996" y="220" width="2" height="18.0" fill="#fff"/><rect x="998" y="230" width="2" height="8.0" fill="#fff"/><rect x="1012" y="228" width="2" height="12.0" fill="#fff"/><rect x="1014" y="220" width="2" height="18.0" fill="#fff"/><rect x="1050" y="220" width="2" height="18.0" fill="#fff"/><rect x="1052" y="230" width="2" height="8.0" fill="#fff"/><rect x="1060" y="226" width="2" height="12.0" fill="#fff"/><rect x="1062" y="232" width="2" height="6.0" fill="#fff"/><rect x="1068" y="232" width="2" height="6.0" fill="#fff"/><rect x="1072" y="226" width="2" height="12.0" fill="#fff"/><rect x="1074" y="220" width="2" height="24.0" fill="#fff"/><rect x="980" y="236" width="2" height="3.0" fill="#fff"/><rect x="982" y="236" width="2" height="8.0" fill="#fff"/><rect x="1010" y="236" width="2" height="8.0" fill="#fff"/><rect x="1018" y="236" width="2" height="4.0" fill="#fff"/><rect x="1020" y="236" width="2" height="8.0" fill="#fff"/><rect x="1026" y="236" width="2" height="8.0" fill="#fff"/><rect x="1040" y="236" width="2" height="8.0" fill="#fff"/><rect x="1042" y="236" width="4" height="14.0" fill="#fff"/><rect x="1076" y="236" width="2" height="4.0" fill="#fff"/><rect x="1080" y="236" width="2" height="8.0" fill="#fff"/><rect x="1082" y="236" width="2" height="4.0" fill="#fff"/><rect x="1084" y="236" width="2" height="14.0" fill="#fff"/><rect x="1086" y="236" width="2" height="6.0" fill="#fff"/><rect x="1088" y="236" width="2" height="14.0" fill="#fff"/><rect x="1090" y="236" width="7" height="8.0" fill="#fff"/><rect x="1112" y="236" width="2" height="8.0" fill="#fff"/><rect x="1120" y="236" width="2" height="4.0" fill="#fff"/><rect x="1122" y="236" width="2" height="8.0" fill="#fff"/><rect x="1126" y="236" width="4" height="8.0" fill="#fff"/><rect x="1132" y="236" width="6" height="8.0" fill="#fff"/><rect x="1138" y="236" width="4" height="4.0" fill="#fff"/><rect x="1142" y="236" width="4" height="8.0" fill="#fff"/><rect x="1146" y="236" width="2" height="4.0" fill="#fff"/><rect x="1152" y="236" width="4" height="8.0" fill="#fff"/><rect x="1162" y="236" width="2" height="8.0" fill="#fff"/><rect x="1164" y="236" width="2" height="14.0" fill="#fff"/><rect x="1180" y="236" width="2" height="8.0" fill="#fff"/><rect x="1194" y="236" width="2" height="8.0" fill="#fff"/><rect x="1216" y="229.9" width="2" height="10.1" fill="#fff"/><rect x="1218" y="236" width="2" height="8.0" fill="#fff"/><rect x="1226" y="236" width="2" height="8.0" fill="#fff"/><rect x="1232" y="236" width="2" height="8.0" fill="#fff"/><rect x="1234" y="236" width="2" height="4.0" fill="#fff"/><rect x="1236" y="236" width="2" height="8.0" fill="#fff"/><rect x="1242" y="236" width="2" height="8.0" fill="#fff"/><rect x="1246" y="236" width="2" height="4.0" fill="#fff"/><rect x="1248" y="236" width="2" height="8.0" fill="#fff"/><rect x="1258" y="236" width="2" height="8.0" fill="#fff"/><rect x="1266" y="226.3" width="2" height="17.7" fill="#fff"/><rect x="1268" y="232.3" width="2" height="17.7" fill="#fff"/><rect x="1282" y="236" width="2" height="4.0" fill="#fff"/><rect x="1284" y="236" width="2" height="8.0" fill="#fff"/><rect x="1198" y="226.3" width="2" height="11.7" fill="#fff"/><rect x="1200" y="232.3" width="2" height="5.7" fill="#fff"/><rect x="1206" y="220" width="2" height="18.0" fill="#fff"/><rect x="1208" y="230" width="2" height="8.0" fill="#fff"/><rect x="1214" y="220" width="2" height="18.0" fill="#fff"/><rect x="1220" y="220" width="2" height="18.0" fill="#fff"/><rect x="1222" y="230" width="2" height="8.0" fill="#fff"/><rect x="1270" y="220" width="2" height="18.0" fill="#fff"/><rect x="1272" y="230" width="2" height="8.0" fill="#fff"/><rect x="1288" y="220" width="2" height="18.0" fill="#fff"/><rect x="1290" y="230" width="2" height="8.0" fill="#fff"/><rect x="1296" y="228" width="2" height="10.0" fill="#fff"/><rect x="1298" y="220" width="2" height="18.0" fill="#fff"/><rect x="652" y="578" width="648" height="2" fill="#00e000"/></svg>
<svg style="position:absolute;left:652px;top:712px" width="656" height="396" viewBox="652 712 656 396" shape-rendering="crispEdges"><rect x="652" y="768" width="656" height="2" fill="#fff"/><rect x="1014" y="768" width="2" height="82" fill="#fff"/><rect x="1016" y="768" width="2" height="162" fill="#fff"/><rect x="1030" y="768" width="2" height="162" fill="#fff"/><rect x="1032" y="768" width="2" height="82" fill="#fff"/><rect x="1044" y="768" width="2" height="50" fill="#fff"/><rect x="1046" y="768" width="2" height="26" fill="#fff"/><rect x="1062" y="768" width="2" height="98" fill="#fff"/><rect x="1064" y="768" width="2" height="194" fill="#fff"/><rect x="1072" y="768" width="2" height="150" fill="#fff"/><rect x="1074" y="768" width="2" height="298" fill="#fff"/><rect x="1076" y="768" width="2" height="202" fill="#fff"/><rect x="1078" y="768" width="2" height="50" fill="#fff"/><rect x="1080" y="768" width="2" height="96" fill="#fff"/><rect x="1082" y="768" width="2" height="294" fill="#fff"/><rect x="1084" y="768" width="2" height="280" fill="#fff"/><rect x="1086" y="768" width="2" height="290" fill="#fff"/><rect x="1088" y="768" width="2" height="296" fill="#fff"/><rect x="1096" y="768" width="2" height="286" fill="#fff"/><rect x="1098" y="768" width="2" height="144" fill="#fff"/><rect x="1106" y="768" width="2" height="152" fill="#fff"/><rect x="1108" y="768" width="2" height="300" fill="#fff"/><rect x="1110" y="768" width="2" height="258" fill="#fff"/><rect x="1112" y="768" width="2" height="136" fill="#fff"/><rect x="1114" y="768" width="2" height="270" fill="#fff"/><rect x="1120" y="768" width="2" height="274" fill="#fff"/><rect x="1122" y="768" width="2" height="138" fill="#fff"/><rect x="1150" y="768" width="2" height="144" fill="#fff"/><rect x="1152" y="768" width="2" height="284" fill="#fff"/><rect x="1154" y="768" width="2" height="150" fill="#fff"/><rect x="1156" y="768" width="2" height="298" fill="#fff"/><rect x="1168" y="768" width="2" height="98" fill="#fff"/><rect x="1170" y="768" width="2" height="50" fill="#fff"/><rect x="1178" y="768" width="2" height="142" fill="#fff"/><rect x="1180" y="768" width="2" height="280" fill="#fff"/><rect x="1184" y="768" width="2" height="200" fill="#fff"/><rect x="1186" y="768" width="2" height="100" fill="#fff"/><rect x="1188" y="768" width="2" height="288" fill="#fff"/><rect x="1190" y="768" width="2" height="302" fill="#fff"/><rect x="1196" y="768" width="2" height="303" fill="#fff"/><rect x="1198" y="768" width="2" height="280" fill="#fff"/><rect x="1200" y="768" width="2" height="282" fill="#fff"/><rect x="1202" y="768" width="2" height="152" fill="#fff"/><rect x="1204" y="768" width="2" height="300" fill="#fff"/><rect x="1216" y="768" width="2" height="154" fill="#fff"/><rect x="1218" y="768" width="2" height="303" fill="#fff"/><rect x="1234" y="768" width="2" height="290" fill="#fff"/><rect x="1236" y="768" width="2" height="146" fill="#fff"/><rect x="1248" y="768" width="2" height="234" fill="#fff"/><rect x="1250" y="768" width="2" height="152" fill="#fff"/><rect x="1252" y="768" width="2" height="302" fill="#fff"/><rect x="1256" y="768" width="2" height="290" fill="#fff"/><rect x="1258" y="768" width="2" height="146" fill="#fff"/><rect x="1268" y="768" width="2" height="152" fill="#fff"/><rect x="1270" y="874" width="2" height="196" fill="#fff"/><rect x="1272" y="768" width="2" height="108" fill="#fff"/><rect x="1274" y="768" width="2" height="46" fill="#fff"/><rect x="1276" y="768" width="2" height="88" fill="#fff"/><rect x="1278" y="768" width="2" height="130" fill="#fff"/><rect x="1280" y="768" width="2" height="256" fill="#fff"/><rect x="1282" y="768" width="2" height="34" fill="#fff"/><rect x="1284" y="768" width="2" height="64" fill="#fff"/><rect x="1288" y="768" width="2" height="304" fill="#fff"/><rect x="1290" y="768" width="2" height="302" fill="#fff"/><rect x="1292" y="768" width="2" height="152" fill="#fff"/><rect x="1294" y="768" width="2" height="296" fill="#fff"/><rect x="1296" y="768" width="2" height="148" fill="#fff"/><rect x="1300" y="768" width="2" height="244" fill="#fff"/><rect x="1302" y="768" width="2" height="148" fill="#fff"/><rect x="1304" y="768" width="2" height="292" fill="#fff"/><rect x="1130" y="768" width="2" height="6" fill="#fff"/><rect x="1224" y="768" width="2" height="6" fill="#fff"/><rect x="984" y="770" width="4" height="4" fill="#fff"/><rect x="1138" y="762" width="2" height="6" fill="#fff"/><rect x="1140" y="766" width="2" height="2" fill="#fff"/><rect x="1026" y="766" width="2" height="2" fill="#fff"/><rect x="1100" y="766" width="2" height="2" fill="#fff"/></svg>
</body></html>
